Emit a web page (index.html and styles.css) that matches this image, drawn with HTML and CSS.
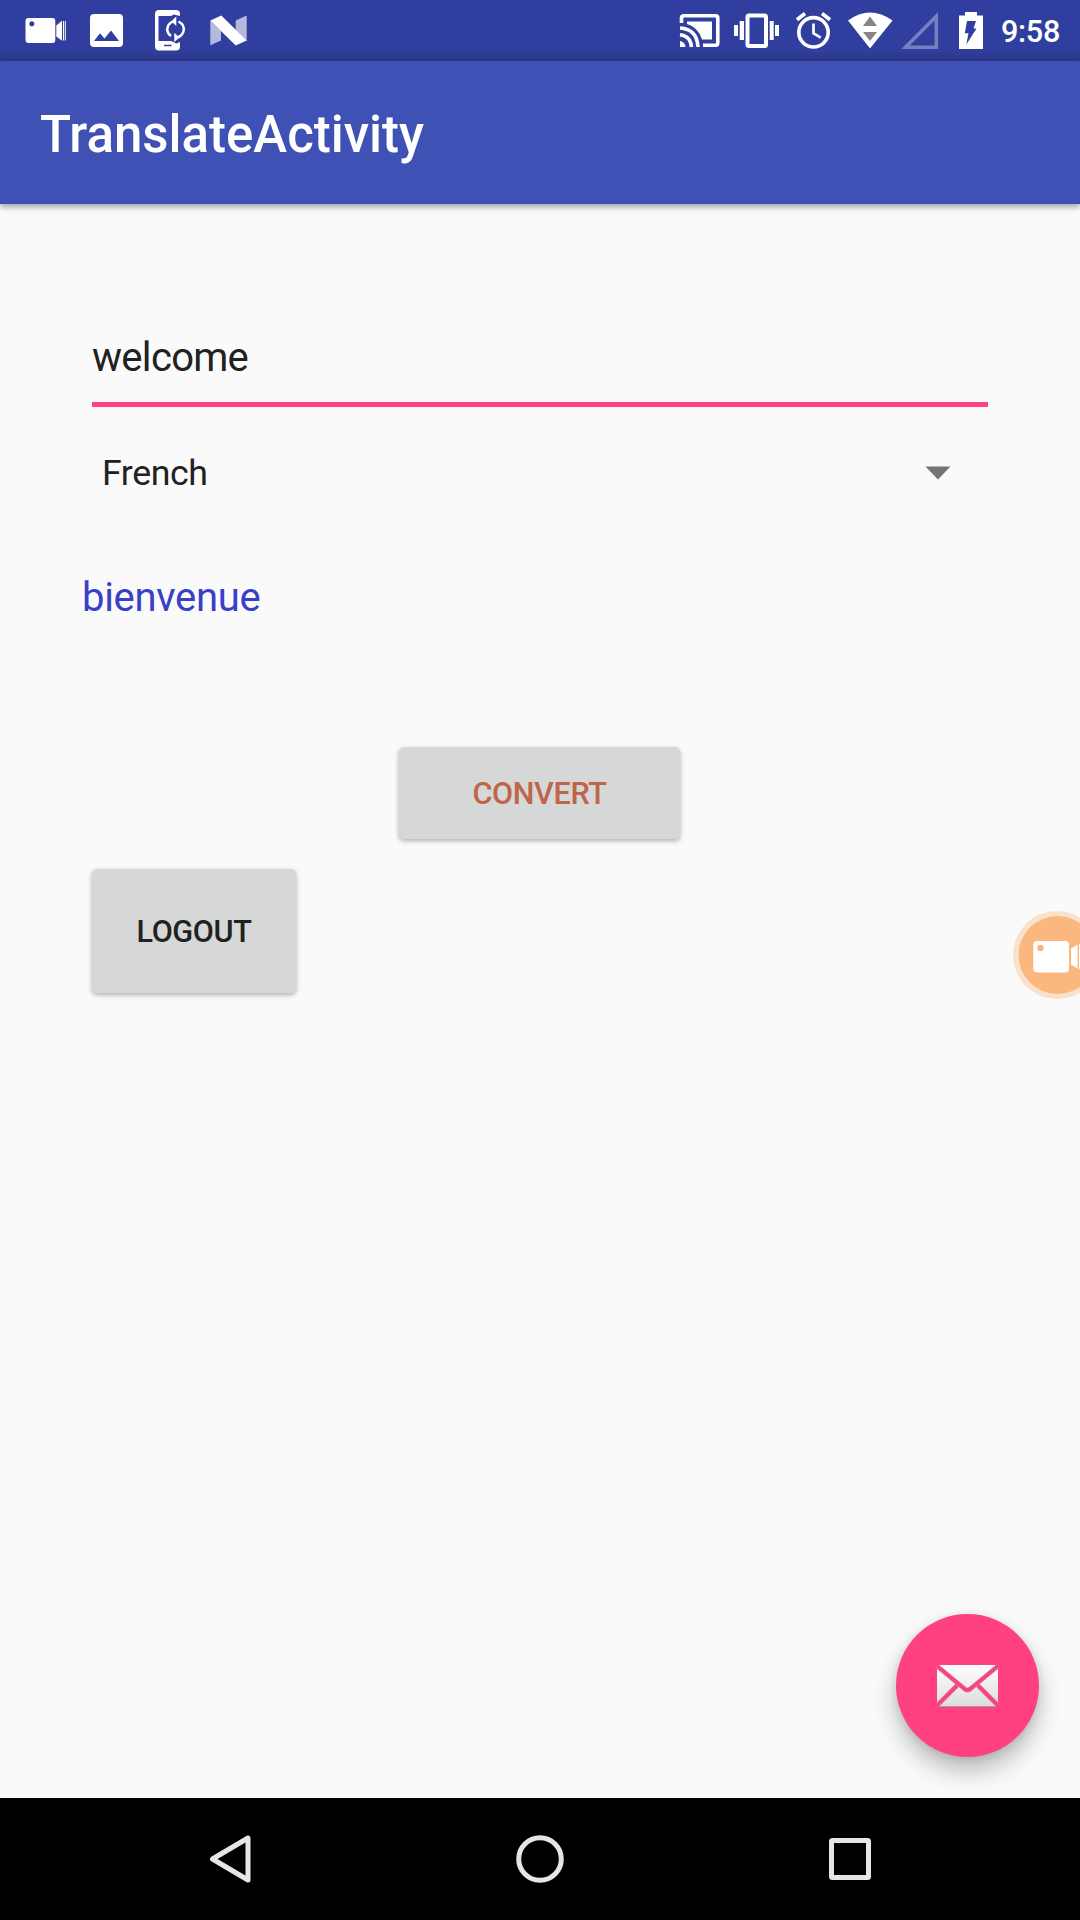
FILE: index.html
```
<!DOCTYPE html>
<html lang="en">
<head>
<meta charset="utf-8">
<title>TranslateActivity</title>
<link rel="stylesheet" href="styles.css">
</head>
<body>
<div class="screen">
  <header class="status-bar">
    <div class="notifications">
      <svg width="61" height="61" viewBox="15 0 61 61" fill="#fff"><path fill-rule="evenodd" d="M28.500 18H52.500Q55.300 18 55.300 21V40Q55.300 43 52.500 43H28.500Q25.500 43 25.500 40V21Q25.500 18 28.500 18ZM31.800 21.200a2.600 2.600 0 1 0 .01 0Z"/><path d="M56.300 25.500 62 20.800V40.800L56.300 36.500Z"/><path d="M63 21h1v19.500h-1zM64.800 21h1v19.500h-1z"/></svg>
      <svg width="61" height="61" viewBox="76 0 61 61" fill="#fff"><path fill-rule="evenodd" d="M94 14H119Q123 14 123 18V43Q123 47 119 47H94Q90 47 90 43V18Q90 14 94 14ZM94 41H119L111 30.500 104.500 38.500 100 33.300Z"/></svg>
      <svg width="61" height="61" viewBox="137 0 61 61" fill="#fff"><path d="M180 16V14Q180 10 176 10H159Q155 10 155 14V46.500Q155 50.500 159 50.500H176Q180 50.500 180 46.500V42L176.500 43.500 171 41H158.500V16H171L174 14.500Z"/><path d="M164 45.500h7.500" stroke="#303f9f" stroke-width="1.500"/><path d="M171 36Q165.500 32 168.200 25.500Q170.500 21.500 175 21.200M178.500 21.500Q185.500 25 183.300 32Q181 37.500 175.500 37.500" fill="none" stroke="#fff" stroke-width="2.500"/><path d="M176.300 16.500V26L171.300 21.200ZM174.300 32.700V42L179.300 37.500Z"/></svg>
      <svg width="61" height="61" viewBox="198 0 61 61" fill="#fff"><path opacity=".64" d="M210.300 20.500 221 31V40.500L210.300 45.300ZM246.700 15.500V41L235.700 30V20.500Z"/><path d="M210.300 20.500 221.300 15.500 246.700 40.500 235.700 45.500Z"/></svg>
    </div>
    <div class="system">
      <svg width="57" height="61" viewBox="671 0 57 61" fill="none" stroke="#fff"><path d="M681.500 23V18Q681.500 15.700 684 15.700H715.500Q717.800 15.700 717.800 18V43Q717.800 45.200 715.500 45.200H703" stroke-width="3.600"/><path d="M687 21.500H712V39.500H702Q698 27 687 24Z" fill="#fff" stroke="none"/><path d="M680 28Q697 29 698 47M680 34.800Q690.500 36 691.500 47" stroke-width="3.600"/><path d="M680 41Q685 42 685.500 47H680Z" fill="#fff" stroke="none"/></svg>
      <svg width="57" height="61" viewBox="728 0 57 61" fill="#fff"><path d="M734 25h4v11h-4zM739.700 21h4.300v19h-4.300zM769.700 21h4v19h-4zM775 25h4v11h-4z"/><rect x="747.500" y="15.500" width="18.500" height="30.500" rx="1.500" fill="none" stroke="#fff" stroke-width="4"/></svg>
      <svg width="57" height="61" viewBox="785 0 57 61" fill="none" stroke="#fff"><circle cx="813.500" cy="32.300" r="14.700" stroke-width="3.600"/><path d="M813.500 23.500V33.300L820.700 37.700" stroke-width="2.700"/><path d="M797 19.800 805 13.500M822 13.500 830 19.800" stroke-width="3.800"/></svg>
      <svg width="56" height="61" viewBox="842 0 56 61"><path d="M848 20.500Q870 4.500 892.500 20.500L870 48.500Z" fill="#fff"/><path d="M863 26 870 16.500 877 26ZM863 32H877L870 41Z" fill="#858585"/></svg>
      <svg width="50" height="61" viewBox="898 0 50 61"><path d="M905.500 47.200H936.300V16.200Z" fill="none" stroke="#fff" stroke-opacity=".34" stroke-width="3.500"/></svg>
      <svg width="46" height="61" viewBox="948 0 46 61"><path d="M959 15.500H965V12H977V15.500H983V49H959Z" fill="#fff"/><path d="M967 21H976L973.500 28.500H976.500L966.300 44.500L968.500 33.300H964.800Z" fill="#303f9f"/></svg>
      <time class="clock">9:58</time>
    </div>
  </header>

  <div class="app-bar"><h1 class="title">TranslateActivity</h1></div>

  <main class="content">
    <div class="field">welcome</div>
    <div class="spinner">
      <span>French</span>
      <svg width="26" height="14" viewBox="0 0 26 14"><path d="M.5.500H25.500L13 13.500Z" fill="#757575"/></svg>
    </div>
    <p class="result">bienvenue</p>
    <button class="button convert">CONVERT</button>
    <button class="button logout">LOGOUT</button>
  </main>

  <svg class="recorder" width="90" height="90" viewBox="1012 910 90 90"><circle cx="1057" cy="955" r="44" fill="#fae1cc"/><circle cx="1057.500" cy="955" r="39" fill="#fab77e"/><rect x="1033.300" y="941" width="35.700" height="31.500" rx="4" fill="#fff"/><circle cx="1040.500" cy="948" r="3.200" fill="#fab77e"/><path d="M1071 948.500 1077.500 944.500V968.500L1071 964.500ZM1079 944h3v25h-3z" fill="#fff"/></svg>

  <button class="fab" aria-label="Email">
    <svg width="63" height="44" viewBox="0 0 63 44">
      <defs><linearGradient id="paper" x2="0" y2="1"><stop stop-color="#fff"/><stop offset="1" stop-color="#dcdcdc"/></linearGradient></defs>
      <rect x="1" y="1" width="61" height="42" fill="url(#paper)"/>
      <path d="M4 42.500H59" stroke="#a99ca2" stroke-width="1"/>
      <path d="M1 2 27.500 24Q31.500 28 35.500 24L62 2M1 41.500 21 21.500M62 41.500 42 21.500" fill="none" stroke="#e27a9f" stroke-width="4.600"/>
      <path d="M1 2 27.500 24Q31.500 28 35.500 24L62 2M1 41.500 21 21.500M62 41.500 42 21.500" fill="none" stroke="#f5447f" stroke-width="3.200"/>
      <path d="M0 0H4L1 4V0M63 0H59L62 4V0M0 44V39L5 44M63 44V39L58 44" fill="#ff4081"/>
    </svg>
  </button>

  <nav class="nav-bar">
    <svg width="64" height="64" viewBox="198 1827 64 64"><path d="M212.500 1859 248 1838V1880Z"/></svg>
    <svg width="64" height="64" viewBox="508 1827 64 64"><circle cx="540" cy="1859" r="21.300"/></svg>
    <svg width="64" height="64" viewBox="818 1827 64 64"><rect x="831.500" y="1840.500" width="37" height="37" rx="1"/></svg>
  </nav>
</div>
</body>
</html>
```
FILE: styles.css
```
* { box-sizing: border-box; }
body { margin: 0; font-family: Roboto, sans-serif; }
svg { display: block; flex: none; }
button { border: 0; padding: 0; font-family: inherit; }

.screen {
  position: relative;
  width: 1080px;
  height: 1920px;
  display: flex;
  flex-direction: column;
  overflow: hidden;
  background: #fafafa;
}

.status-bar {
  height: 61px;
  display: flex;
  justify-content: space-between;
  padding: 0 20px 0 15px;
  background: linear-gradient(#303f9f 50px, #2a3786 61px);
}
.notifications, .system { display: flex; }
.clock {
  padding-left: 7px;
  font-size: 30.600px;
  font-weight: 500;
  line-height: 63px;
  letter-spacing: -.3px;
  color: #fff;
}

.app-bar {
  height: 143px;
  padding-left: 40px;
  background: #3f51b5;
  box-shadow: 0 3px 6px rgba(0, 0, 0, .35);
}
.title {
  margin: 0;
  font-size: 51px;
  font-weight: 500;
  line-height: 148px;
  color: #fff;
}

.content {
  flex: 1;
  display: flex;
  flex-direction: column;
  align-items: flex-start;
  padding: 102px 82px 0;
  color: #212121;
}
.field {
  width: 896px;
  height: 101px;
  margin-left: 10px;
  border-bottom: 5px solid #ff4081;
  font-size: 40px;
  line-height: 103px;
  letter-spacing: -.7px;
}
.spinner {
  width: 896px;
  height: 61px;
  margin: 35px 0 0 10px;
  padding: 0 37px 0 10px;
  display: flex;
  align-items: center;
  justify-content: space-between;
  font-size: 35.700px;
  letter-spacing: -.4px;
}
.result {
  margin: 65px 0 0;
  font-size: 40px;
  line-height: 60px;
  letter-spacing: -.3px;
  color: #3a3fc8;
}
.button {
  border-radius: 5px;
  background: #d6d8d7;
  box-shadow: 0 2px 5px rgba(0, 0, 0, .3);
  font-size: 30.600px;
  font-weight: 500;
  letter-spacing: -.35px;
  color: #212121;
}
.convert {
  width: 281px;
  height: 92px;
  margin: 119px 0 0 317px;
  color: #bf6549;
}
.logout {
  width: 204px;
  height: 124px;
  margin: 30px 0 0 10px;
}

.recorder { position: absolute; left: 1012px; top: 910px; }

.fab {
  position: absolute;
  right: 41px;
  bottom: 163px;
  width: 143px;
  height: 143px;
  display: flex;
  align-items: center;
  justify-content: center;
  border-radius: 50%;
  background: #ff4081;
  box-shadow: 0 14px 24px rgba(0, 0, 0, .25), 0 2px 8px rgba(0, 0, 0, .1);
}

.nav-bar {
  position: relative;
  height: 122px;
  display: flex;
  justify-content: space-between;
  align-items: center;
  padding: 0 198px;
  background: #000;
}
.nav-bar svg {
  fill: none;
  stroke: #e6e6e6;
  stroke-width: 5px;
  stroke-linejoin: round;
}
```
